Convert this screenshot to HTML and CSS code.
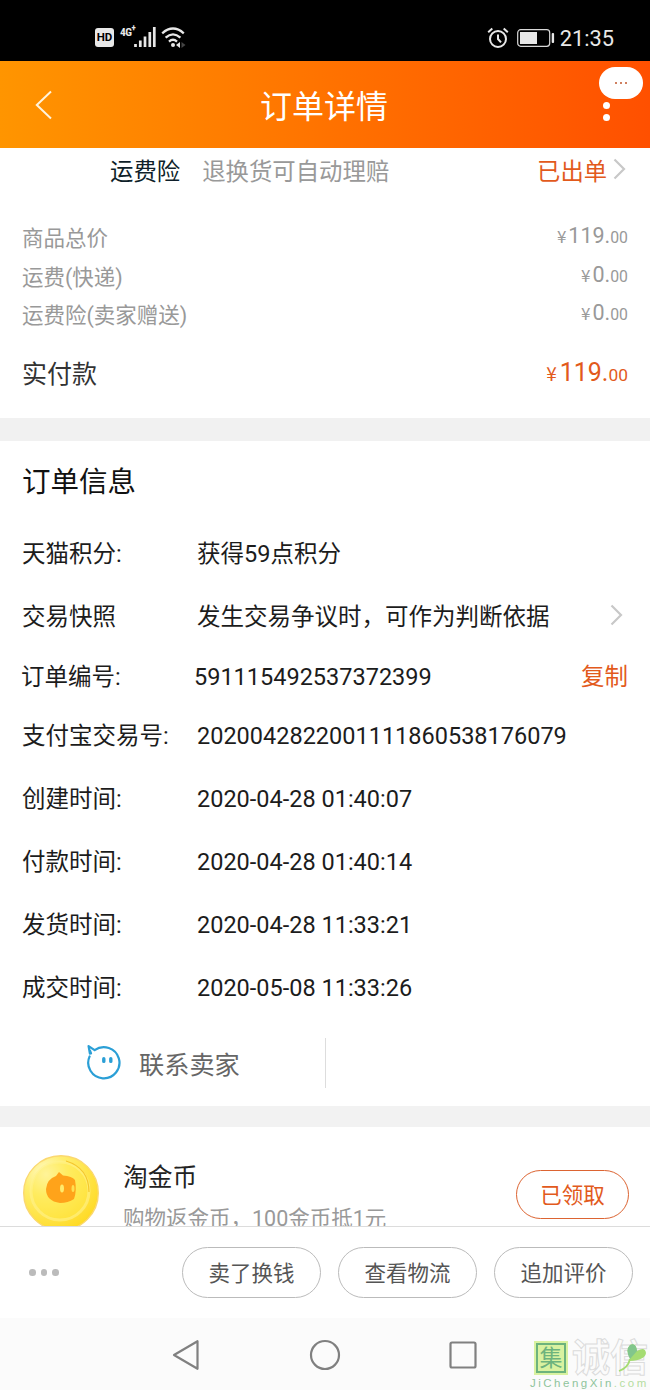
FILE: index.html
```html
<!DOCTYPE html>
<html lang="zh-CN">
<head>
    <meta charset="UTF-8">
    <meta name="viewport" content="width=device-width, initial-scale=1.0">
    <title>订单详情</title>
    <link rel="stylesheet" href="styles.css">
</head>
<body>
<div class="phone">

    <div class="status">
        <div class="status-left">
            <span class="hd">HD</span>
            <span class="net">4G<sup>+</sup></span>
            <svg class="signal" width="22" height="20" viewBox="0 0 22 20">
                <path d="M1.5 17v3M6.3 13.5V20M11 9.5V20M15.8 5V20M20.3 0V20" stroke="#e8e8e8" stroke-width="2.7" fill="none"/>
            </svg>
            <svg class="wifi" width="25" height="21" viewBox="0 0 25 21">
                <path d="M1.2 6.3Q12 -3.2 22.8 6.3M4.6 10.7Q12 4 19.4 10.7M8 14.6Q12 11 16 14.6" stroke="#e8e8e8" stroke-width="2.3" fill="none"/>
                <circle cx="12" cy="18" r="2" fill="#e8e8e8"/>
                <path d="M19 15v6l-4-3z" fill="#e8e8e8"/>
                <path d="M20.5 15v6l4-3z" fill="#444"/>
            </svg>
        </div>
        <div class="status-right">
            <svg width="22" height="22" viewBox="0 0 22 22">
                <circle cx="11" cy="12" r="8" stroke="#e8e8e8" stroke-width="2" fill="none"/>
                <path d="M11 7.5V12l3 3.4M1.2 5.2L5.3 1.5M20.8 5.2L16.7 1.5" stroke="#e8e8e8" stroke-width="2" fill="none"/>
            </svg>
            <svg class="battery" width="38" height="18" viewBox="0 0 38 18">
                <rect x=".7" y=".7" width="32" height="16.6" rx="3" stroke="#d8d8d8" stroke-width="1.2" fill="none"/>
                <rect x="3" y="3" width="17" height="12" fill="#e8e8e8"/>
                <rect x="34.7" y="4" width="2.4" height="10" rx="1" fill="#e8e8e8"/>
            </svg>
            <span class="clock">21:35</span>
        </div>
    </div>

    <div class="header">
        <svg class="back" width="18" height="30" viewBox="0 0 18 30">
            <path d="M16 1.5L1.8 15L16 28.5" stroke="#fff3dc" stroke-width="2" fill="none"/>
        </svg>
        <h1>订单详情</h1>
        <div class="menu"><i></i><i></i></div>
        <div class="bubble"><i></i><i></i><i></i></div>
    </div>

    <div class="insurance">
        <span class="ins-name">运费险</span>
        <span class="ins-desc">退换货可自动理赔</span>
        <span class="ins-state">已出单</span>
        <svg class="arrow" width="13" height="22" viewBox="0 0 13 22">
            <path d="M1.5 1.5L11 11L1.5 20.5" stroke="#c8c8c8" stroke-width="2.2" fill="none"/>
        </svg>
    </div>

    <div class="prices">
        <div class="price-row"><span>商品总价</span><span class="money"><small class="yen">¥</small>119.<small>00</small></span></div>
        <div class="price-row"><span>运费(快递)</span><span class="money"><small class="yen">¥</small>0.<small>00</small></span></div>
        <div class="price-row"><span>运费险(卖家赠送)</span><span class="money"><small class="yen">¥</small>0.<small>00</small></span></div>
        <div class="price-row total"><span>实付款</span><span class="money"><small class="yen">¥</small>119.<small>00</small></span></div>
    </div>

    <div class="gap"></div>

    <div class="info">
        <h2>订单信息</h2>
        <div class="row"><span class="label">天猫积分:</span><span>获得59点积分</span></div>
        <div class="row snapshot">
            <span class="label">交易快照</span><span>发生交易争议时，可作为判断依据</span>
            <svg class="arrow" width="13" height="22" viewBox="0 0 13 22">
                <path d="M1.5 1.5L11 11L1.5 20.5" stroke="#c8c8c8" stroke-width="2.2" fill="none"/>
            </svg>
        </div>
        <div class="row number"><span class="label">订单编号:</span><span>591115492537372399</span><span class="copy">复制</span></div>
        <div class="row alipay"><span class="label">支付宝交易号:</span><span>2020042822001111860538176079</span></div>
        <div class="row"><span class="label">创建时间:</span><span>2020-04-28 01:40:07</span></div>
        <div class="row"><span class="label">付款时间:</span><span>2020-04-28 01:40:14</span></div>
        <div class="row"><span class="label">发货时间:</span><span>2020-04-28 11:33:21</span></div>
        <div class="row"><span class="label">成交时间:</span><span>2020-05-08 11:33:26</span></div>
    </div>

    <div class="contact">
        <div class="contact-btn">
            <svg class="wangwang" width="36" height="36" viewBox="0 0 36 36">
                <path d="M8.6 6.2A15.6 15.6 0 1 1 3.6 12.4M3.9 9.6L2.6 2.2L8.6 6.2M4.2 7L5 9.4" stroke="#2b9fd6" stroke-width="2.2" stroke-linecap="round" stroke-linejoin="round" fill="none"/>
                <path d="M17.8 14.8v2.6M24.8 14.8v2.6" stroke="#2b9fd6" stroke-width="3.4" stroke-linecap="round"/>
            </svg>
            <span>联系卖家</span>
        </div>
    </div>

    <div class="gap gap-small"></div>

    <div class="coin-card">
        <svg class="coin" width="78" height="78" viewBox="0 0 78 78">
            <defs>
                <radialGradient id="gold" cx=".3" cy=".25" r=".85">
                    <stop offset="0" stop-color="#fffbd0"/>
                    <stop offset=".35" stop-color="#ffee70"/>
                    <stop offset="1" stop-color="#ffd91f"/>
                </radialGradient>
            </defs>
            <circle cx="39" cy="39" r="37.3" fill="url(#gold)" stroke="#fbd870" stroke-width="1.4"/>
            <circle cx="38" cy="37" r="29" fill="#ffe945" fill-opacity=".4" stroke="#fff28c" stroke-opacity=".6" stroke-width="3"/>
            <path d="M44 7Q67 14 67 38" stroke="#f5c72c" stroke-width="1.2" fill="none"/>
            <path d="M34 22L37 18L41 21.5Q50 22 53 26Q55 37 52 45Q46 49 38 49Q24 47 24 35Q25 25 34 22Z" fill="#ffa31a"/>
            <ellipse cx="40" cy="34.5" rx="2" ry="4" fill="#ffea6c"/>
            <ellipse cx="51" cy="34.5" rx="1.5" ry="3.5" fill="#ffdf50"/>
        </svg>
        <div class="coin-text">
            <p class="coin-title">淘金币</p>
            <p class="coin-desc">购物返金币，100金币抵1元</p>
        </div>
        <span class="received">已领取</span>
    </div>

    <div class="toolbar">
        <div class="more"><i></i><i></i><i></i></div>
        <span class="btn">卖了换钱</span>
        <span class="btn">查看物流</span>
        <span class="btn">追加评价</span>
    </div>

    <div class="navbar">
        <svg width="30" height="34" viewBox="0 0 30 34">
            <path d="M26.5 3.2V30.8L3 17Z" stroke="#808080" stroke-width="2.2" stroke-linejoin="round" fill="none"/>
        </svg>
        <svg width="34" height="34" viewBox="0 0 34 34">
            <circle cx="17" cy="17" r="14" stroke="#808080" stroke-width="2.2" fill="none"/>
        </svg>
        <svg width="30" height="30" viewBox="0 0 30 30">
            <rect x="2.5" y="2.5" width="25" height="25" rx="1.5" stroke="#808080" stroke-width="2.2" fill="none"/>
        </svg>
        <div class="mark">
            <div class="mark-top">
                <span class="seal"><b>集</b></span>
                <span class="outline">诚信</span>
                <svg class="leaf" width="30" height="32" viewBox="0 0 30 32">
                    <path d="M13 17Q8 9 13 4Q19 1 20 10Q28 5 29 12Q28 19 13 20Z" fill="#a5dc72"/>
                    <path d="M13 18Q8 9 13 4Q19 1 20 10Z" fill="#82c68c"/>
                    <path d="M13 18Q11 27 2 30" stroke="#a5dc72" stroke-width="1.8" fill="none"/>
                </svg>
            </div>
            <div class="mark-url">JiChengXin<span>.com</span></div>
        </div>
    </div>

</div>
</body>
</html>
```
FILE: styles.css
```css
*{
    box-sizing: border-box;
}

body{
    margin: 0;
    background: #ffffff;
    font-family: Roboto, "Noto Sans CJK SC", sans-serif;
    color: #1c1c1c;
}

h1, h2, p{
    margin: 0;
    font-weight: 400;
}

svg{
    display: block;
    flex: none;
}

.phone{
    width: 650px;
    height: 1390px;
    display: flex;
    flex-direction: column;
    overflow: hidden;
    white-space: nowrap;
}

.phone > div{
    flex: none;
}

/* barra de estado */
.status{
    height: 61px;
    padding: 14px 36px 0 95px;
    display: flex;
    justify-content: space-between;
    background: #000000;
    color: #e8e8e8;
}

.status-left{
    display: flex;
    height: 47px;
}

.hd{
    width: 19px;
    height: 19px;
    margin-top: 14px;
    border-radius: 3px;
    background: #e8e8e8;
    color: #000000;
    font-size: 11.5px;
    font-weight: 700;
    line-height: 19px;
    text-align: center;
}

.net{
    width: 20px;
    margin-left: 6px;
    margin-top: 12px;
    font-family: "Roboto Condensed", Roboto, sans-serif;
    font-size: 11.5px;
    font-weight: 700;
    line-height: 12px;
    letter-spacing: -.5px;
}

.net sup{
    font-size: 9px;
    line-height: 0;
}

.signal{
    margin-top: 13px;
    margin-left: -6px;
}

.wifi{
    margin-top: 13px;
    margin-left: 5px;
}

.status-right{
    display: flex;
    align-items: center;
    height: 47px;
}

.battery{
    margin-left: 8px;
}

.clock{
    margin-left: 5px;
    padding-top: 1px;
    font-size: 21.8px;
}

/* cabecera */
.header{
    position: relative;
    height: 87px;
    padding: 0 40px 0 35px;
    display: flex;
    align-items: center;
    justify-content: space-between;
    background: linear-gradient(90deg, #ff9500, #ff5000);
    color: #ffffff;
}

.header h1{
    margin-right: 8px;
    padding-top: 4px;
    font-size: 32px;
    line-height: 40px;
}

.menu{
    display: flex;
    flex-direction: column;
    gap: 5px;
    padding-top: 13px;
}

.menu i{
    width: 7px;
    height: 7px;
    border-radius: 50%;
    background: #ffffff;
}

.bubble{
    position: absolute;
    top: 6px;
    right: 7px;
    width: 44px;
    height: 32px;
    border-radius: 16px;
    background: #ffffff;
    display: flex;
    align-items: center;
    justify-content: center;
    gap: 3px;
}

.bubble i{
    width: 2px;
    height: 2px;
    background: #d08060;
}

/* seguro de envio */
.insurance{
    height: 67px;
    padding: 7px 24px 0 110px;
    display: flex;
    font-size: 23.4px;
    line-height: 34px;
}

.ins-name{
    color: #0f1f2a;
}

.ins-desc{
    margin-left: 22px;
    color: #999999;
}

.ins-state{
    margin-left: auto;
    color: #e25a1c;
    font-size: 23.3px;
}

.arrow{
    margin: 3px 0 0 6px;
}

/* precios */
.prices{
    height: 203px;
    padding: 4px 22px 0;
}

.price-row{
    height: 38.5px;
    display: flex;
    justify-content: space-between;
    color: #999999;
    font-size: 21.5px;
    line-height: 39px;
}

.money{
    line-height: 34px;
}

.money small{
    font-size: 15.8px;
}

.money .yen{
    margin-right: 2px;
    font-family: "Noto Sans CJK SC", sans-serif;
    font-size: 17px;
    line-height: 1;
}

.total{
    height: 50px;
    margin-top: 18px;
    color: #333333;
    font-size: 25px;
    line-height: 44px;
}

.total .money{
    color: #e25a1c;
    line-height: 39px;
}

.total .money small{
    font-size: 17.4px;
}

.total .money .yen{
    margin-right: 3px;
    font-size: 19px;
}

.gap{
    height: 23px;
    background: #f1f1f1;
}

.gap-small{
    height: 21px;
    background: #f2f2f2;
}

/* informacion del pedido */
.info{
    height: 597px;
    padding: 0 22px;
}

.info h2{
    height: 81px;
    padding-top: 2px;
    font-size: 28.5px;
    line-height: 80px;
    color: #111111;
}

.row{
    height: 63px;
    display: flex;
    align-items: center;
    font-size: 23.5px;
    line-height: 34px;
}

.label{
    width: 175px;
}

.snapshot .arrow{
    margin: 0 5px 3px auto;
}

.number{
    height: 57px;
}

.number .label{
    margin-left: -1px;
    width: 173px;
}

.copy{
    margin-left: auto;
    color: #e25a1c;
}

.alipay{
    height: 62px;
}

.contact{
    height: 68px;
    padding-bottom: 18px;
}

.contact-btn{
    width: 326px;
    height: 50px;
    padding-left: 86px;
    display: flex;
    align-items: center;
    gap: 17px;
    border-right: 1px solid #dddddd;
    color: #666666;
    font-size: 25.2px;
}

.wangwang{
    margin-bottom: 2px;
}

/* monedas */
.coin-card{
    height: 99px;
    padding: 27px 22px 0;
    display: flex;
    overflow: hidden;
}

.coin-text{
    margin-left: 23px;
}

.coin-title{
    margin-top: 5px;
    color: #222222;
    font-size: 24.7px;
    line-height: 38px;
}

.coin-desc{
    margin-top: 6px;
    color: #999999;
    font-size: 21.5px;
    line-height: 32px;
}

.received{
    width: 113px;
    height: 49px;
    margin: 16px -1px 0 auto;
    border: 1.5px solid #dc6432;
    border-radius: 25px;
    color: #e25a1c;
    font-size: 21.5px;
    line-height: 50px;
    text-align: center;
}

/* barra de acciones */
.toolbar{
    height: 92px;
    padding: 0 17px 0 29px;
    display: flex;
    align-items: center;
    gap: 17px;
    border-top: 1px solid #dcdcdc;
    background: #ffffff;
}

.more{
    display: flex;
    gap: 5px;
    margin-right: auto;
}

.more i{
    width: 6.5px;
    height: 6.5px;
    border-radius: 50%;
    background: #bbbbbb;
}

.btn{
    width: 139px;
    height: 51px;
    border: 1px solid #bbbbbb;
    border-radius: 26px;
    color: #555555;
    font-size: 21.5px;
    line-height: 52px;
    text-align: center;
}

.navbar{
    position: relative;
    height: 72px;
    padding: 2px 172px 0 171px;
    display: flex;
    align-items: center;
    justify-content: space-between;
    background: #fbfbfb;
}

.mark{
    position: absolute;
    left: 530px;
    top: 23px;
    width: 120px;
}

.mark-top{
    display: flex;
    height: 36px;
}

.seal{
    width: 34px;
    height: 34px;
    margin-left: 4px;
    padding: 2px;
    background: #d9f2a0;
}

.seal b{
    display: block;
    width: 30px;
    height: 30px;
    border: 2px solid #6db37d;
    color: #6db37d;
    font-size: 23px;
    font-weight: 400;
    line-height: 27px;
    text-align: center;
}

.outline{
    margin-left: 4px;
    color: #fbfbfb;
    font-size: 38px;
    font-weight: 700;
    line-height: 34px;
    -webkit-text-stroke: 1px #dcdcdc;
}

.leaf{
    position: absolute;
    left: 87px;
    top: 0;
}

.mark-url{
    color: #8fc49b;
    font-family: "Liberation Sans", Arial, sans-serif;
    font-size: 11.5px;
    line-height: 13px;
    letter-spacing: 2.5px;
}

.mark-url span{
    color: #b5dda0;
}
```
